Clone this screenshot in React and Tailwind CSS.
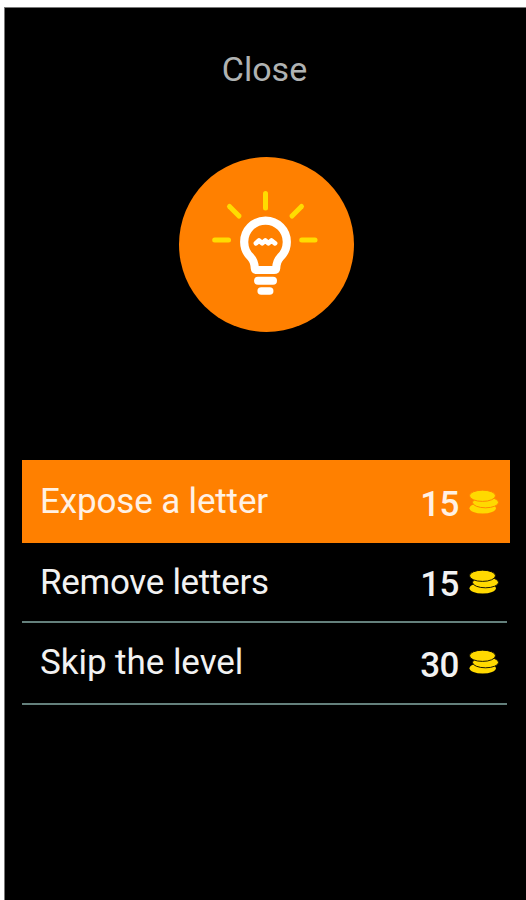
import React from "react";

const hints = [
  {
    label: "Expose a letter",
    cost: 15,
    row: "w-[488px] h-[83px] pr-[11px] bg-[#ff8000] text-[#fff1e4]",
    spacing: "tracking-[-0.15px]",
    gap: "stroke-[#ff8000]",
    costPad: "pt-1.5",
  },
  {
    label: "Remove letters",
    cost: 15,
    row: "w-[485px] h-20 pr-2 border-b-2 border-[#64807c] text-[#f2f2f2]",
    spacing: "tracking-[-0.3px]",
    gap: "stroke-black",
    costPad: "pt-1",
  },
  {
    label: "Skip the level",
    cost: 30,
    row: "w-[485px] h-[82px] pr-2 pb-0.5 border-b-2 border-[#64807c] text-[#f2f2f2]",
    spacing: "tracking-[-0.05px]",
    gap: "stroke-black",
    costPad: "pt-1.5",
  },
];

const BulbIcon = () => (
  <svg
    viewBox="179 157 175 175"
    className="w-[175px] h-[175px]"
    fill="none"
    strokeLinecap="round"
    strokeLinejoin="round"
  >
    <circle cx="266.5" cy="244.5" r="87.5" fill="#ff8000" />
    <g stroke="#ffdc00" strokeWidth="5">
      <path d="M265.500 193.500v14.500" />
      <path d="M229.500 206.500l9.500 9.500" />
      <path d="M301.500 206.500l-9.500 9.500" />
      <path d="M214.700 240h13.800" />
      <path d="M301.700 240h13.300" />
    </g>
    <path
      d="M257 270q-2 0-2.200-2C254.500 263 254 260.500 250.800 257.300A21.300 21.300 0 1 1 280.200 257.300C277 260.500 276.500 263 276.200 268q-.2 2-2.200 2z"
      stroke="#fff"
      strokeWidth="8.200"
    />
    <path
      d="M256 243.300l3-2.800 3.200 2.800 3.100-2.800 3.100 2.800 3.100-2.800 3.500 2.800"
      stroke="#fff"
      strokeWidth="4.800"
    />
    <path d="M258 280.800h15" stroke="#fff" strokeWidth="8" />
    <path d="M261.200 291h8.500" stroke="#fff" strokeWidth="7.500" />
  </svg>
);

const CoinsIcon = ({ gap }) => (
  <svg viewBox="0 0 30 26" className="w-[30px] h-[26px]" fill="#ffd900">
    <ellipse cx="13.700" cy="19.300" rx="13.200" ry="5.200" />
    <ellipse cx="16.500" cy="13.400" rx="13" ry="5.400" className={gap} strokeWidth="0.900" />
    <ellipse cx="13.500" cy="6.800" rx="13" ry="5.600" className={gap} strokeWidth="0.900" />
  </svg>
);

const HintRow = ({ label, cost, row, spacing, gap, costPad }) => (
  <button className={`flex items-center justify-between pl-[18px] ${row}`}>
    <span className={`text-[35px] leading-none whitespace-nowrap ${spacing}`}>{label}</span>
    <span className="flex items-center gap-2.5">
      <span className={`text-[35px] leading-none font-medium tracking-[-0.5px] ${costPad}`}>{cost}</span>
      <CoinsIcon gap={gap} />
    </span>
  </button>
);

const App = () => (
  <div className="w-[526px] h-[900px] bg-white pl-1 pt-[7px] font-['Roboto',sans-serif] overflow-hidden">
    <div className="flex flex-col h-full bg-black border-t border-l border-[#777]">
      <div className="flex flex-col items-center pt-9 h-[149px] w-[519px]">
        <button className="text-[34px] leading-[50px] text-[#b0b3b3]">Close</button>
      </div>
      <div className="flex justify-center h-[303px] w-[522px]">
        <BulbIcon />
      </div>
      <div className="flex flex-col pl-[17px]">
        {hints.map((hint) => (
          <HintRow key={hint.label} {...hint} />
        ))}
      </div>
    </div>
  </div>
);

export default App;
